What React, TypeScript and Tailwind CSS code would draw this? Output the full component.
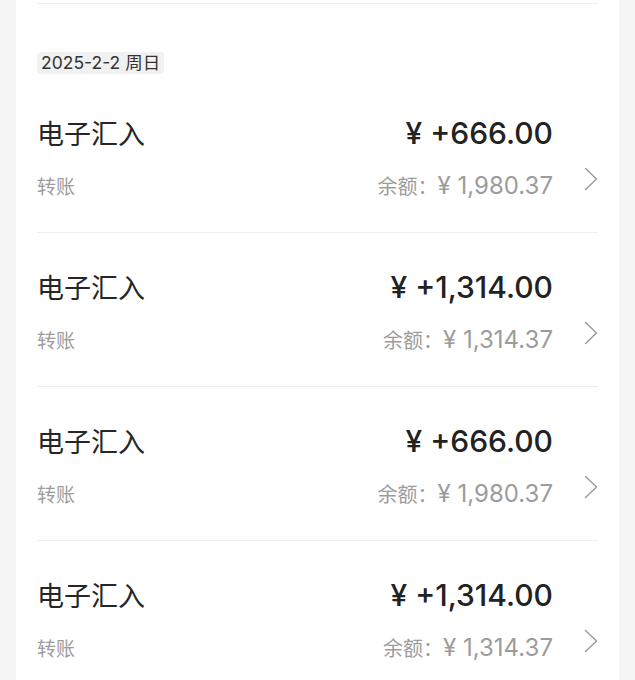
import React from "react";

const rows = [
  { amount: "+666.00", balance: "1,980.37" },
  { amount: "+1,314.00", balance: "1,314.37" },
  { amount: "+666.00", balance: "1,980.37" },
  { amount: "+1,314.00", balance: "1,314.37" },
];

const cjk = "font-['Noto_Sans_CJK_SC',sans-serif]";
const num = "font-['Inter','Noto_Sans_CJK_SC',sans-serif]";

function Chevron() {
  return (
    <svg width="14" height="24" viewBox="0 0 14 24" fill="none">
      <path d="M1.5 1.5 L12.5 12 L1.5 22.5" stroke="#9a9a9a" strokeWidth="1.4" strokeLinecap="round" strokeLinejoin="round" />
    </svg>
  );
}

function Row({ amount, balance, first }: { amount: string; balance: string; first?: boolean }) {
  return (
    <div className={`${first ? "pt-[41px]" : "pt-[36px]"} pb-[31px] border-b border-[#eeeeee]`}>
      <div className="grid grid-cols-[1fr_auto_45px] grid-rows-[36px_30px] gap-y-[20px] items-center">
        <div className={`${cjk} text-[27px] leading-[36px] text-[#262626]`}>电子汇入</div>
        <div className={`${num} justify-self-end text-[30px] leading-[36px] font-medium text-[#222222]`}>
          ¥ {amount}
        </div>
        <div />
        <div className={`${cjk} text-[19px] leading-[30px] text-[#9c9c9c]`}>转账</div>
        <div className="justify-self-end flex items-baseline text-[#9c9c9c] leading-[30px]">
          <span className={`${cjk} text-[20px]`}>余额：</span>
          <span className={`${num} text-[24px]`}>¥ {balance}</span>
        </div>
        <div className="flex justify-end -translate-y-[7px]">
          <Chevron />
        </div>
      </div>
    </div>
  );
}

export default function App() {
  return (
    <div className="min-h-screen w-full bg-[#f5f5f5]">
      <div className="ml-[16px] w-[603px] bg-white px-[21px] h-[680px] overflow-hidden">
        <div className="pt-[3px]">
          <div className="h-px bg-[#eeeeee]" />
        </div>
        <div className="mt-[48px] flex">
          <div className={`${num} h-[22px] rounded-[4px] bg-[#f1f1f1] px-[4px] text-[17.5px] leading-[22px] text-[#333333]`}>
            2025-2-2 周日
          </div>
        </div>
        {rows.map((r, i) => (
          <Row key={i} amount={r.amount} balance={r.balance} first={i === 0} />
        ))}
      </div>
    </div>
  );
}
